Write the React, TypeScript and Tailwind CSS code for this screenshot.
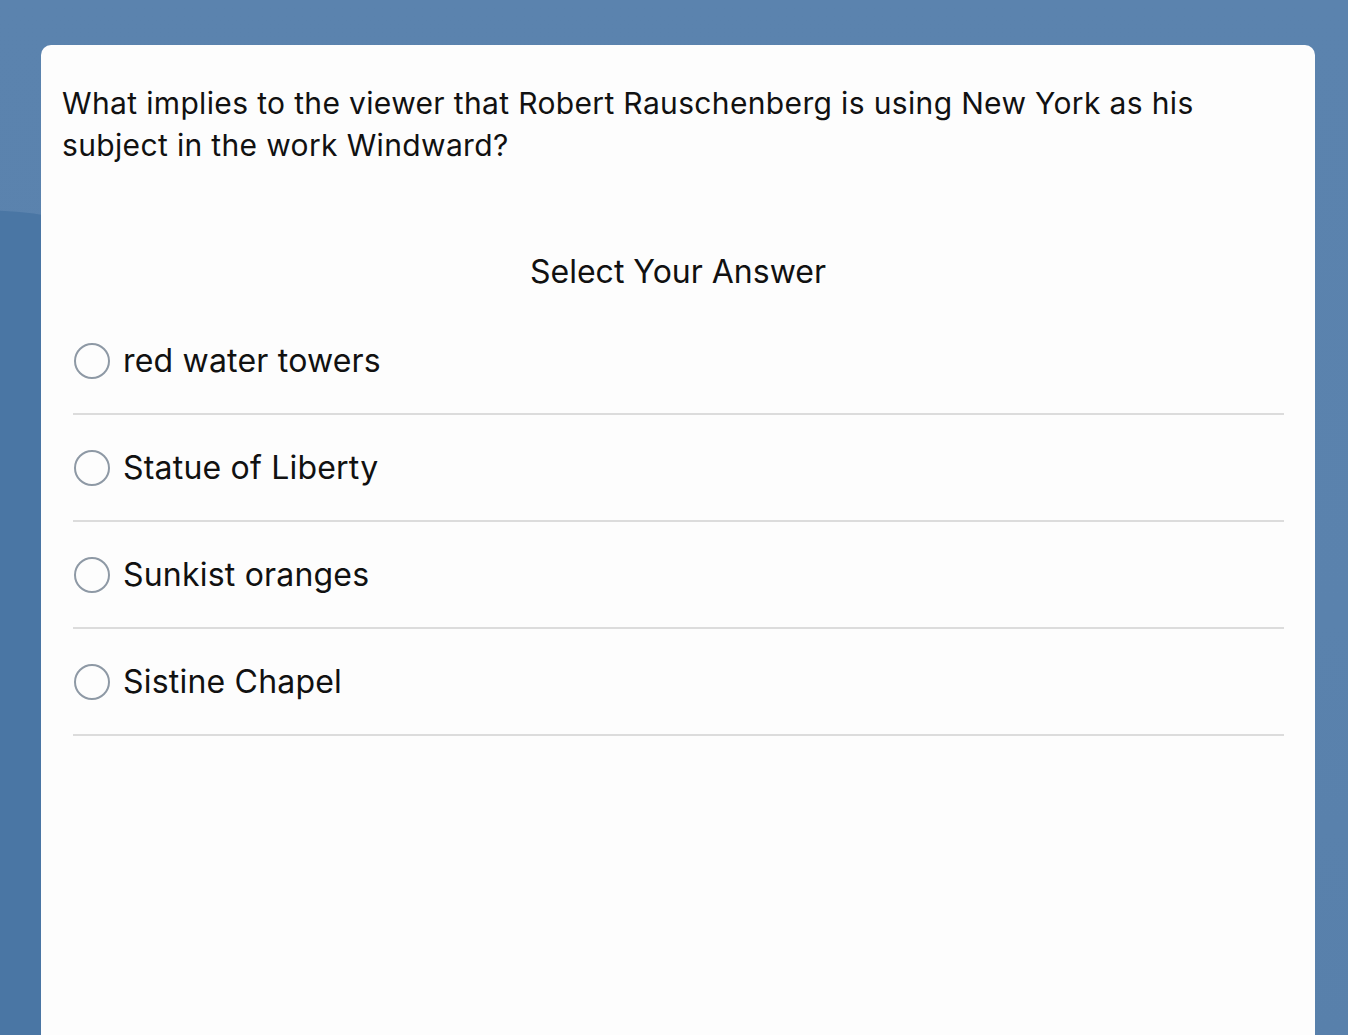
import { useState } from "react";

const OPTIONS = [
  "red water towers",
  "Statue of Liberty",
  "Sunkist oranges",
  "Sistine Chapel",
];

export default function App() {
  const [selected, setSelected] = useState<number | null>(null);

  return (
    <div className="relative h-[1035px] w-full overflow-hidden bg-[linear-gradient(180deg,#5b83ae_0%,#5a82ad_60%,#5880ab_100%)] font-['Inter','Noto_Sans',sans-serif]">
      {/* background wave */}
      <div className="absolute left-[-300px] top-[200px] h-[900px] w-[700px] rotate-[-20deg] rounded-[50%] bg-[#4a76a4]" />

      <div className="relative ml-[41px] mr-[33px] mt-[45px] h-[1000px] rounded-t-[10px] bg-[#fdfdfd] px-[21px] pt-[37px]">
        <p className="text-[30px] leading-[42px] tracking-[0.35px] text-[#111]">
          What implies to the viewer that Robert Rauschenberg is using New York as his subject in the work Windward?
        </p>

        <p className="mt-[86px] text-center text-[32px] leading-[40px] text-[#111]">
          Select Your Answer
        </p>

        <div className="mt-[16px] ml-[11px] mr-[10px]">
          {OPTIONS.map((opt, i) => (
            <button
              key={opt}
              onClick={() => setSelected(i)}
              className="flex h-[107px] w-full items-center gap-[13px] border-b-2 border-[#dcdcdc] pl-px text-left"
            >
              <span className="flex h-[36px] w-[36px] items-center justify-center rounded-full border-2 border-[#8e99a5]">
                {selected === i && <span className="h-[20px] w-[20px] rounded-full bg-[#3b82f6]" />}
              </span>
              <span className="text-[32px] tracking-[0.2px] text-[#111]">{opt}</span>
            </button>
          ))}
        </div>
      </div>
    </div>
  );
}
